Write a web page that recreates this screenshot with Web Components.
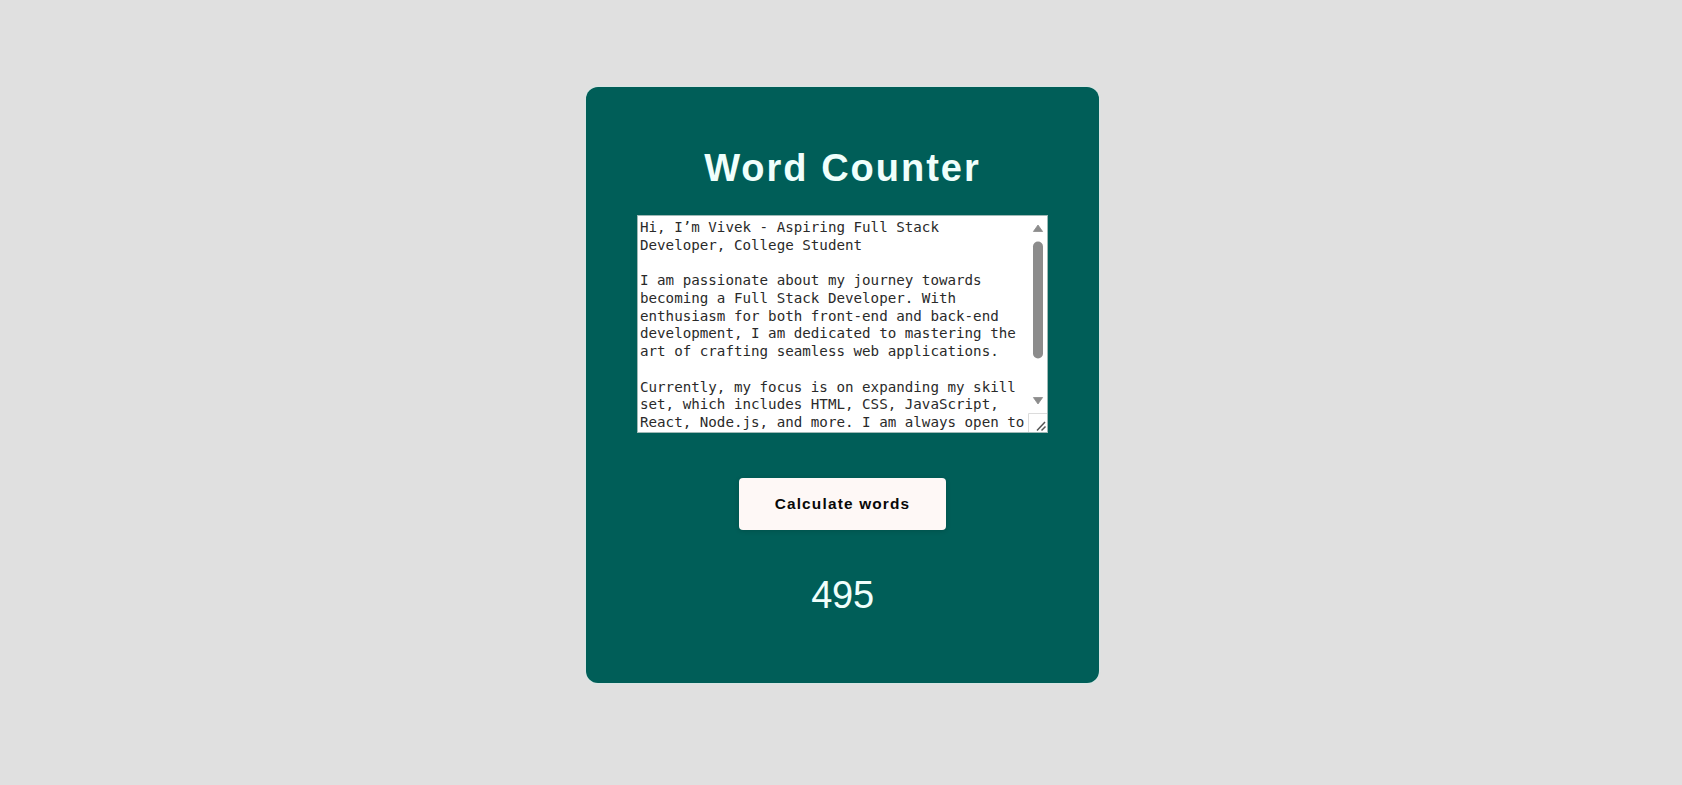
<!DOCTYPE html>
<html lang="en">
<head>
<meta charset="utf-8">
<title>Word Counter</title>
<style>
html, body { height: 100%; }
body { margin: 0; background: #e0e0e0; font-family: "Liberation Sans", Arial, sans-serif; overflow: hidden; }
</style>
</head>
<body>
<word-counter></word-counter>
<template id="counter-template">
<style>
:host { display: flex; justify-content: center; align-items: flex-start; height: 100%; box-sizing: border-box; padding: 87px 0 0 3px; }
.card { width: 513px; height: 596px; box-sizing: border-box; border-radius: 12px; background: #005e58; color: #f0fffc; display: flex; flex-direction: column; align-items: center; padding-top: 59px; box-shadow: 0 0 1px 1px #d8e6e4; }
h1 { margin: 0; height: 69px; line-height: 45px; font-size: 38px; font-weight: 700; letter-spacing: 2px; white-space: nowrap; }
count-button { margin-top: 45px; }
output { display: block; margin-top: 43px; line-height: 44px; font-size: 38px; letter-spacing: -.3px; }
</style>
<section class="card">
<h1>Word Counter</h1>
<text-box></text-box>
<count-button>Calculate words</count-button>
<output>495</output>
</section>
</template>
<template id="text-template">
<style>
:host { display: flex; width: 411px; height: 218px; box-sizing: border-box; background: #fff; border: 1px solid #9fb9b6; color: #2a2a2a; overflow: hidden; }
.text { flex: 1; min-width: 0; padding: 2.75px 0 0 2px; white-space: pre; font: 14.2px/17.76px "DejaVu Sans Mono", monospace; }
svg { display: block; width: 20px; height: 216px; flex: none; }
</style>
<div class="text" id="text"></div>
<svg viewBox="0 0 20 216">
<g fill="#8c8c8c"><path d="M11 9 15.600 15.500H6.400Z" stroke="#8c8c8c" stroke-width=".8" stroke-linejoin="round"/>
<rect x="6" y="25.500" width="10" height="117" rx="5"/>
<path d="M11 188 15.600 181.500H6.400Z" stroke="#8c8c8c" stroke-width=".8" stroke-linejoin="round"/></g>
<path d="M1.500 216V197.500H20" fill="none" stroke="#dcdcdc"/>
<path d="M10 214.500 18 206M14.500 214.500 18.500 210.500" fill="none" stroke="#555" stroke-width="1.5"/>
</svg>
</template>
<template id="button-template">
<style>
:host { display: block; }
button { display: block; width: 207px; height: 52px; padding: 0 0 1px; border: 0; border-radius: 4px; background: #fef8f6; color: #080808; font: 700 15.4px/20px "Liberation Sans", Arial, sans-serif; letter-spacing: 1.18px; box-shadow: 0 1px 5px rgba(0,0,0,.15); }
</style>
<button type="button"><slot></slot></button>
</template>
<script>
const attach = (host, id) => {
  const root = host.attachShadow({ mode: "open" });
  root.append(document.getElementById(id).content.cloneNode(true));
  return root;
};
const content = `Hi, I’m Vivek - Aspiring Full Stack
Developer, College Student

I am passionate about my journey towards
becoming a Full Stack Developer. With
enthusiasm for both front-end and back-end
development, I am dedicated to mastering the
art of crafting seamless web applications.

Currently, my focus is on expanding my skill
set, which includes HTML, CSS, JavaScript,
React, Node.js, and more. I am always open to`;
customElements.define("text-box", class extends HTMLElement {
  constructor() { super(); attach(this, "text-template").getElementById("text").textContent = content; }
});
customElements.define("count-button", class extends HTMLElement {
  constructor() { super(); attach(this, "button-template"); }
});
customElements.define("word-counter", class extends HTMLElement {
  constructor() { super(); attach(this, "counter-template"); }
});
</script>
</body>
</html>
